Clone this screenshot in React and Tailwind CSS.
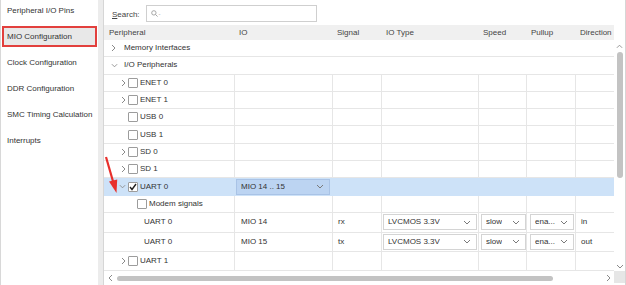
import React from 'react';

const COLS = [130, 98, 49, 97, 48, 49, 39];
const HEADERS = ['Peripheral', 'IO', 'Signal', 'IO Type', 'Speed', 'Pullup', 'Direction'];

const SIDE_ITEMS = [
  'Peripheral I/O Pins',
  'MIO Configuration',
  'Clock Configuration',
  'DDR Configuration',
  'SMC Timing Calculation',
  'Interrupts',
];

function ChevronRight({ className = '' }) {
  return (
    <svg width="5" height="8" viewBox="0 0 5 8" className={className}>
      <polyline points="1,1 4,4 1,7" fill="none" stroke="#8a8a8a" strokeWidth="1" />
    </svg>
  );
}

function ChevronDown({ color = '#8a8a8a' }) {
  return (
    <svg width="8" height="5" viewBox="0 0 8 5">
      <polyline points="1,1 4,4 7,1" fill="none" stroke={color} strokeWidth="1" />
    </svg>
  );
}

function Checkbox({ checked }) {
  return (
    <div className="w-[10px] h-[10px] shrink-0 border border-[#9c9c9c] rounded-[1px] bg-white flex items-center justify-center">
      {checked && (
        <svg width="8" height="8" viewBox="0 0 8 8">
          <polyline points="1,4 3,6.5 7,1" fill="none" stroke="#222" strokeWidth="1.4" />
        </svg>
      )}
    </div>
  );
}

function Select({ width, text, selected }) {
  return (
    <div
      className={`h-[16px] flex items-center justify-between pl-[4px] pr-[5px] border ${
        selected ? 'bg-[#bcd4f2] border-[#a9c3e6]' : 'bg-white border-[#d4d4d4]'
      }`}
      style={{ width }}
    >
      <span className="truncate">{text}</span>
      <ChevronDown color="#7a7a7a" />
    </div>
  );
}

// tree label in the Peripheral column
function TreeCell({ indent, chevron, checkbox, checked, label }) {
  return (
    <div className="flex items-center h-full">
      <div className="shrink-0" style={{ width: indent }} />
      {chevron === 'right' && <div className="w-[7px] shrink-0 flex justify-start"><ChevronRight /></div>}
      {chevron === 'down' && <div className="w-[7px] shrink-0 flex justify-start -ml-[2px] mr-[2px]"><ChevronDown /></div>}
      {checkbox && <Checkbox checked={checked} />}
      {checkbox && <div className="w-[2px] shrink-0" />}
      <span className="whitespace-nowrap">{label}</span>
    </div>
  );
}

function GridRow({ height, cells, lines = true, selected }) {
  return (
    <div
      className={`flex border-b ${selected ? 'bg-[#cde2f8] border-[#cde2f8]' : 'border-[#e6e6e6]'}`}
      style={{ height }}
    >
      {COLS.map((w, i) => (
        <div
          key={i}
          className={`shrink-0 flex items-center ${i > 0 && lines ? 'border-l border-[#e6e6e6]' : ''} ${
            i > 0 ? 'pl-[4px]' : ''
          }`}
          style={{ width: w }}
        >
          {cells[i]}
        </div>
      ))}
    </div>
  );
}

function SpanRow({ height, chevron, label }) {
  return (
    <div className="flex items-center border-b border-[#e6e6e6]" style={{ height }}>
      <div className="w-[7px] shrink-0" />
      <div className="w-[7px] shrink-0 flex">{chevron === 'right' ? <ChevronRight /> : <ChevronDown />}</div>
      <div className="w-[6px] shrink-0" />
      <span>{label}</span>
    </div>
  );
}

export default function App() {
  const R = '17.3px';
  const tree = (label, opts = {}) => <TreeCell label={label} {...opts} />;

  return (
    <div className="w-[626px] h-[285px] bg-[#ececec] flex overflow-hidden relative font-['Liberation_Sans',Arial,sans-serif] text-[8px] text-[#333]">
      {/* Left navigation */}
      <div className="w-[98px] h-full bg-white border-l border-[#d8d8d8] flex flex-col shrink-0">
        {SIDE_ITEMS.map((item, i) => (
          <div
            key={item}
            className={`h-[21px] mb-[5px] ml-[1px] w-[95px] flex items-center pl-[3px] border-2 ${
              i === 1 ? 'border-[#e2403d] bg-[#e8e8e8]' : 'border-transparent'
            }`}
          >
            {item}
          </div>
        ))}
      </div>

      {/* Main panel */}
      <div className="ml-[5px] w-[523px] h-full bg-white border-l border-r border-[#d6d6d6] flex flex-col shrink-0 relative">
        {/* search */}
        <div className="h-[25px] flex items-start pt-[5px] pl-[8px] shrink-0">
          <span className="mt-[4px] mr-[6px] text-[#444]">
            <span className="underline">S</span>earch:
          </span>
          <div className="w-[171px] h-[17px] border border-[#cfcfcf] flex items-center pl-[4px] gap-[1px]">
            <svg width="7" height="7" viewBox="0 0 8 8">
              <circle cx="3.3" cy="3.3" r="2.5" fill="none" stroke="#9a9a9a" strokeWidth="1" />
              <line x1="5.2" y1="5.2" x2="7.5" y2="7.5" stroke="#9a9a9a" strokeWidth="1" />
            </svg>
            <span className="text-[#9a9a9a] text-[6px] mt-[1px]">-</span>
          </div>
        </div>

        {/* header */}
        <div className="h-[15px] flex shrink-0">
          <div className="w-[510px] bg-[#f0f0f0] flex text-[#444]">
            {COLS.map((w, i) => (
              <div key={i} className="shrink-0 flex items-center pl-[5px]" style={{ width: w }}>
                {HEADERS[i]}
              </div>
            ))}
          </div>
        </div>

        {/* body */}
        <div className="h-[231px] flex shrink-0">
          <div className="w-[510px] overflow-hidden">
            <SpanRow height={R} chevron="right" label="Memory Interfaces" />
            <SpanRow height={R} chevron="down" label="I/O Peripherals" />
            <GridRow height={R} cells={[tree('ENET 0', { indent: 17, chevron: 'right', checkbox: true })]} />
            <GridRow height={R} cells={[tree('ENET 1', { indent: 17, chevron: 'right', checkbox: true })]} />
            <GridRow height={R} cells={[tree('USB 0', { indent: 24, checkbox: true })]} />
            <GridRow height={R} cells={[tree('USB 1', { indent: 24, checkbox: true })]} />
            <GridRow height={R} cells={[tree('SD 0', { indent: 17, chevron: 'right', checkbox: true })]} />
            <GridRow height={R} cells={[tree('SD 1', { indent: 17, chevron: 'right', checkbox: true })]} />
            <GridRow
              height={R}
              lines={false}
              selected
              cells={[
                tree('UART 0', { indent: 17, chevron: 'down', checkbox: true, checked: true }),
                <div className="-ml-[2px]"><Select width={94} text="MIO 14 .. 15" selected /></div>,
              ]}
            />
            <GridRow height={R} cells={[tree('Modem signals', { indent: 33, checkbox: true })]} />
            <GridRow
              height="20px"
              cells={[
                <span className="pl-[40px]">UART 0</span>,
                <span className="pl-[2px]">MIO 14</span>,
                <span className="pl-[1px]">rx</span>,
                <div className="-ml-[3px]"><Select width={94} text="LVCMOS 3.3V" /></div>,
                <div className="-ml-[2px]"><Select width={45} text="slow" /></div>,
                <div className="-ml-[1px]"><Select width={44} text="ena..." /></div>,
                <span className="pl-[1px]">in</span>,
              ]}
            />
            <GridRow
              height="19px"
              cells={[
                <span className="pl-[40px]">UART 0</span>,
                <span className="pl-[2px]">MIO 15</span>,
                <span className="pl-[1px]">tx</span>,
                <div className="-ml-[3px]"><Select width={94} text="LVCMOS 3.3V" /></div>,
                <div className="-ml-[2px]"><Select width={45} text="slow" /></div>,
                <div className="-ml-[1px]"><Select width={44} text="ena..." /></div>,
                <span className="pl-[1px]">out</span>,
              ]}
            />
            <GridRow height="19px" cells={[tree('UART 1', { indent: 17, chevron: 'right', checkbox: true })]} />
          </div>

          {/* vertical scrollbar */}
          <div className="w-[11px] h-full flex flex-col items-center bg-white">
            <svg width="7" height="5" viewBox="0 0 8 5" className="mt-[4px]">
              <polyline points="1,4 4,1 7,4" fill="none" stroke="#8a8a8a" strokeWidth="1" />
            </svg>
            <div className="mt-[3px] w-[6px] h-[126px] rounded-[3px] bg-[#c3c3c3]" />
            <div className="flex-1" />
            <div className="mb-[2px]"><ChevronDown /></div>
          </div>
        </div>

        {/* horizontal scrollbar */}
        <div className="h-[14px] flex shrink-0">
          <div className="w-[510px] flex items-center bg-white">
            <svg width="5" height="8" viewBox="0 0 5 8" className="ml-[4px]">
              <polyline points="4,1 1,4 4,7" fill="none" stroke="#8a8a8a" strokeWidth="1" />
            </svg>
            <div className="ml-[4px] w-[436px] h-[5px] rounded-[3px] bg-[#c3c3c3]" />
            <div className="flex-1" />
            <ChevronRight className="mr-[3px]" />
          </div>
          <div className="w-[11px] h-[12px] bg-[#e6e6e6]" />
        </div>

        {/* red annotation arrow */}
        <svg width="24" height="46" viewBox="0 0 24 46" className="absolute left-[0px] top-[150px]">
          <line x1="2" y1="7" x2="9.2" y2="32" stroke="#e8302c" strokeWidth="2.2" />
          <polygon points="12.5,43 5,31.5 13.2,29.5" fill="#e8302c" />
        </svg>
      </div>
    </div>
  );
}
